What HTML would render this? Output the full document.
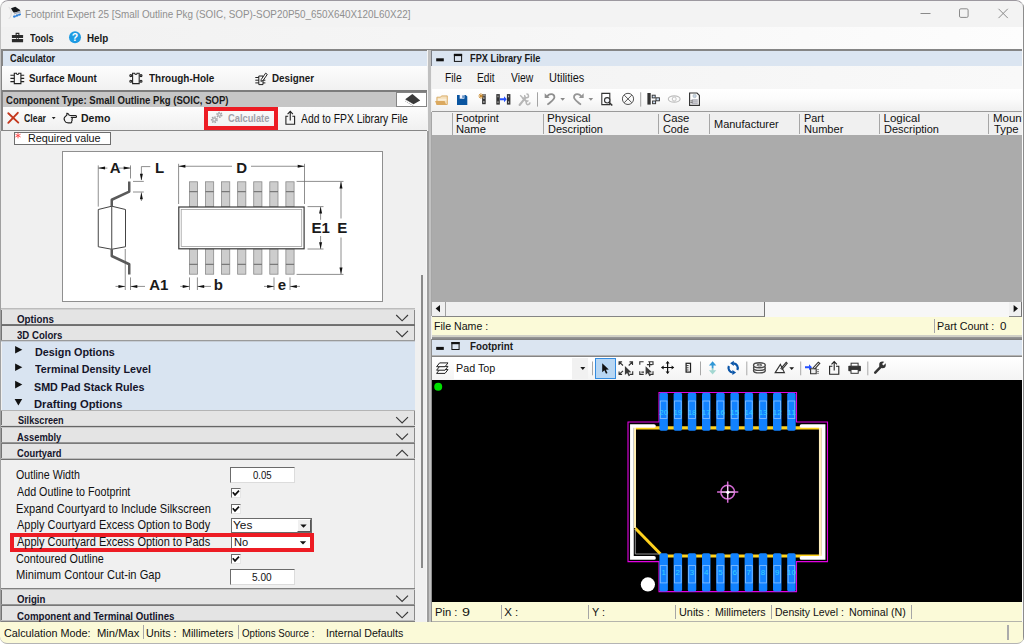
<!DOCTYPE html>
<html><head><meta charset="utf-8">
<style>
*{box-sizing:border-box;margin:0;padding:0}
html,body{width:1024px;height:644px;overflow:hidden;background:#fff;font-family:"Liberation Sans",sans-serif;font-size:11px;color:#000}
.a{position:absolute}
.t{position:absolute;white-space:nowrap;line-height:1;transform-origin:0 0}
#win{position:absolute;left:0;top:0;width:1024px;height:644px;background:#f0f0f0;overflow:hidden;border-radius:8px 8px 7px 7px}
.hdr{position:absolute;left:1px;width:414px;background:#e4e4e4;border-right:1px solid #8a8a8a;border-left:1px solid #747474}
.inp{position:absolute;background:#fff;border:1px solid #6b6b6b;border-right-color:#dcdcdc;border-bottom-color:#dcdcdc}
.cb{position:absolute;left:230.5px;width:10px;height:10px;background:#fff;border-top:1px solid #6b6b6b;border-left:1px solid #6b6b6b;border-right:1px solid #e6e6e6;border-bottom:1px solid #e6e6e6}
.sep{position:absolute;width:1px;background:#a6a6a6}
svg{position:absolute;overflow:visible}
</style></head><body>
<div id="win">
<!-- title bar -->
<div class="a" style="left:0;top:0;width:1024px;height:27px;background:#f3f3f3"></div>
<div class="a" style="left:0;top:27px;width:1024px;height:23px;background:linear-gradient(90deg,#f1f1f1,#f6f6f6 50%,#fdfdfd)"></div>
<div class="a" style="left:0;top:0;width:1024px;height:644px;border:1px solid #c2c2c2;border-top-color:#9c989f;border-radius:8px 8px 7px 7px"></div>
<!-- main frame line -->
<div class="a" style="left:1px;top:49.3px;width:1021px;height:1.6px;background:#858585"></div>

<!-- LEFT PANEL -->
<div class="a" style="left:1px;top:50px;width:1.7px;height:81.2px;background:#858585"></div>
<div class="a" style="left:0px;top:131.2px;width:1.3px;height:490.6px;background:#a0a0a0"></div>
<div class="a" style="left:426px;top:131px;width:1px;height:490.6px;background:#f6f6f6"></div>
<div class="a" style="left:427px;top:50px;width:1px;height:81px;background:#f4f4f4"></div>
<div class="a" style="left:428px;top:50px;width:3px;height:81px;background:#c0c0c0"></div>
<div class="a" style="left:427px;top:131px;width:2px;height:490.6px;background:#9e9e9e"></div>
<div class="a" style="left:429px;top:131px;width:2px;height:490.6px;background:#c2c2c2"></div>
<div class="a" style="left:430.6px;top:50.5px;width:1.4px;height:15.5px;background:#7c8088"></div>
<div class="a" style="left:430.6px;top:112px;width:1.2px;height:204px;background:#a6a6a6"></div>
<div class="a" style="left:430.5px;top:338.5px;width:1.3px;height:283px;background:#8e8e8e"></div>
<div class="a" style="left:2.7px;top:50.9px;width:424.3px;height:15.1px;background:#dbe5f1"></div>
<div class="a" style="left:1.5px;top:66px;width:425.5px;height:23.6px;background:linear-gradient(#fdfdfd,#f1f1f1)"></div>
<div class="a" style="left:1.5px;top:89.6px;width:425.5px;height:2px;background:#7c7c7c"></div>
<div class="a" style="left:2.7px;top:91.5px;width:424.3px;height:15px;background:#c6c6c6"></div>
<div class="a" style="left:396.2px;top:91.5px;width:30.8px;height:15px;background:#fff;border:1px solid #858585"></div>
<div class="a" style="left:2.7px;top:106.5px;width:424.3px;height:23.7px;background:linear-gradient(#fcfcfc,#f0f0f0)"></div>
<div class="a" style="left:204px;top:107px;width:74px;height:23px;border:4px solid #ed1c24"></div>
<div class="a" style="left:2.7px;top:130.1px;width:424.3px;height:1.1px;background:#868686"></div>
<!-- required value -->
<div class="a" style="left:14px;top:132px;width:97px;height:13px;background:#fff;border:1px solid #6e6e6e"></div>
<!-- diagram box -->
<div class="a" style="left:61.8px;top:151px;width:321.2px;height:151px;background:#fff;border:1px solid #8f8f8f"></div>
<svg class="a" style="left:0;top:0" width="430" height="310" viewBox="0 0 430 310">
<g stroke="#6a6a6a" stroke-width="0.75" fill="none">
<path d="M98.25,165.4V206.6 M130.5,165.4V178.5 M98.25,168.1H107.4 M119,168.1H130.5"/>
<path d="M141.4,166.6H150.3 M141.4,166.6V180 M133,181.4H143.8 M133,192H143.8 M141.4,192.5V201"/>
<path d="M178.6,163.8V204 M304.5,163.8V204 M178.6,166.25H232 M251,166.25H304.5"/>
<path d="M307.5,206.6H323.5 M307.5,249H323.5 M320.6,207V219.8 M320.6,236V249"/>
<path d="M296.6,181.4H343.5 M296.6,274.4H343.5 M341,182V218.5 M341,237.5V274"/>
<path d="M125.25,249V290 M130.5,277.4V290 M115.5,286.4H125 M130.5,286.4H145"/>
<path d="M189.5,277.4V290 M197.4,277.4V290 M180.2,286.4H189.5 M197.4,286.4H211"/>
<path d="M274,277.4V290 M290,277.4V290 M264,286.4H274 M290,286.4H300"/>
</g>
<g fill="#111" stroke="none">
<polygon points="98.25,168.1 105.05,166.6 105.05,169.6"/>
<polygon points="130.5,168.1 123.7,166.6 123.7,169.6"/>
<polygon points="141.4,180.6 139.9,173.79999999999998 142.9,173.79999999999998"/>
<polygon points="141.4,192.4 139.9,199.20000000000002 142.9,199.20000000000002"/>
<polygon points="178.6,166.25 185.4,164.75 185.4,167.75"/>
<polygon points="304.5,166.25 297.7,164.75 297.7,167.75"/>
<polygon points="320.6,206.8 319.1,213.60000000000002 322.1,213.60000000000002"/>
<polygon points="320.6,249 319.1,242.2 322.1,242.2"/>
<polygon points="341,181.6 339.5,188.4 342.5,188.4"/>
<polygon points="341,274.2 339.5,267.4 342.5,267.4"/>
<polygon points="125.25,286.4 118.45,284.9 118.45,287.9"/>
<polygon points="130.5,286.4 137.3,284.9 137.3,287.9"/>
<polygon points="189.5,286.4 182.7,284.9 182.7,287.9"/>
<polygon points="197.4,286.4 204.20000000000002,284.9 204.20000000000002,287.9"/>
<polygon points="274,286.4 267.2,284.9 267.2,287.9"/>
<polygon points="290,286.4 296.8,284.9 296.8,287.9"/>
</g>
<polygon points="98.25,209.5 111.75,206.2 125.5,209.5 125.5,246.75 111.75,249.25 98.25,246.75" fill="#fff" stroke="#444" stroke-width="1"/>
<path d="M111.75,206V249.3" stroke="#444" stroke-width="1" fill="none"/>
<path d="M129.25,181.6V191.6L111.75,199.75V206.2 M111.75,249.25V256L129.25,264.25V274.5" stroke="#5a5a5a" stroke-width="2.5" fill="none" stroke-linejoin="round"/>
<rect x="189.40" y="181.8" width="8.2" height="25" fill="#cdcdcd" stroke="#8a8a8a" stroke-width="0.8"/>
<path d="M189.40,191.7h8.2" stroke="#666" stroke-width="1"/>
<rect x="189.40" y="249" width="8.2" height="25.2" fill="#cdcdcd" stroke="#8a8a8a" stroke-width="0.8"/>
<path d="M189.40,264.3h8.2" stroke="#666" stroke-width="1"/>
<rect x="205.48" y="181.8" width="8.2" height="25" fill="#cdcdcd" stroke="#8a8a8a" stroke-width="0.8"/>
<path d="M205.48,191.7h8.2" stroke="#666" stroke-width="1"/>
<rect x="205.48" y="249" width="8.2" height="25.2" fill="#cdcdcd" stroke="#8a8a8a" stroke-width="0.8"/>
<path d="M205.48,264.3h8.2" stroke="#666" stroke-width="1"/>
<rect x="221.56" y="181.8" width="8.2" height="25" fill="#cdcdcd" stroke="#8a8a8a" stroke-width="0.8"/>
<path d="M221.56,191.7h8.2" stroke="#666" stroke-width="1"/>
<rect x="221.56" y="249" width="8.2" height="25.2" fill="#cdcdcd" stroke="#8a8a8a" stroke-width="0.8"/>
<path d="M221.56,264.3h8.2" stroke="#666" stroke-width="1"/>
<rect x="237.64" y="181.8" width="8.2" height="25" fill="#cdcdcd" stroke="#8a8a8a" stroke-width="0.8"/>
<path d="M237.64,191.7h8.2" stroke="#666" stroke-width="1"/>
<rect x="237.64" y="249" width="8.2" height="25.2" fill="#cdcdcd" stroke="#8a8a8a" stroke-width="0.8"/>
<path d="M237.64,264.3h8.2" stroke="#666" stroke-width="1"/>
<rect x="253.72" y="181.8" width="8.2" height="25" fill="#cdcdcd" stroke="#8a8a8a" stroke-width="0.8"/>
<path d="M253.72,191.7h8.2" stroke="#666" stroke-width="1"/>
<rect x="253.72" y="249" width="8.2" height="25.2" fill="#cdcdcd" stroke="#8a8a8a" stroke-width="0.8"/>
<path d="M253.72,264.3h8.2" stroke="#666" stroke-width="1"/>
<rect x="269.80" y="181.8" width="8.2" height="25" fill="#cdcdcd" stroke="#8a8a8a" stroke-width="0.8"/>
<path d="M269.80,191.7h8.2" stroke="#666" stroke-width="1"/>
<rect x="269.80" y="249" width="8.2" height="25.2" fill="#cdcdcd" stroke="#8a8a8a" stroke-width="0.8"/>
<path d="M269.80,264.3h8.2" stroke="#666" stroke-width="1"/>
<rect x="285.88" y="181.8" width="8.2" height="25" fill="#cdcdcd" stroke="#8a8a8a" stroke-width="0.8"/>
<path d="M285.88,191.7h8.2" stroke="#666" stroke-width="1"/>
<rect x="285.88" y="249" width="8.2" height="25.2" fill="#cdcdcd" stroke="#8a8a8a" stroke-width="0.8"/>
<path d="M285.88,264.3h8.2" stroke="#666" stroke-width="1"/>
<rect x="178.8" y="207" width="125.3" height="41.8" fill="#fff" stroke="#3a3a3a" stroke-width="1.2"/>
<rect x="181.2" y="209.4" width="120.5" height="37" fill="none" stroke="#a0a0a0" stroke-width="0.8"/>
<text x="115.2" y="172.9" text-anchor="middle" font-family="Liberation Sans,sans-serif" font-weight="bold" font-size="15" fill="#1a1a1a">A</text>
<text x="159.6" y="172.9" text-anchor="middle" font-family="Liberation Sans,sans-serif" font-weight="bold" font-size="15" fill="#1a1a1a">L</text>
<text x="241.7" y="172.9" text-anchor="middle" font-family="Liberation Sans,sans-serif" font-weight="bold" font-size="15" fill="#1a1a1a">D</text>
<text x="320.7" y="232.6" text-anchor="middle" font-family="Liberation Sans,sans-serif" font-weight="bold" font-size="15" fill="#1a1a1a">E1</text>
<text x="342.2" y="232.6" text-anchor="middle" font-family="Liberation Sans,sans-serif" font-weight="bold" font-size="15" fill="#1a1a1a">E</text>
<text x="158.8" y="289.9" text-anchor="middle" font-family="Liberation Sans,sans-serif" font-weight="bold" font-size="15" fill="#1a1a1a">A1</text>
<text x="218.3" y="289.9" text-anchor="middle" font-family="Liberation Sans,sans-serif" font-weight="bold" font-size="15" fill="#1a1a1a">b</text>
<text x="282" y="289.9" text-anchor="middle" font-family="Liberation Sans,sans-serif" font-weight="bold" font-size="15" fill="#1a1a1a">e</text>
</svg>
<!-- scrollbar thumb -->
<div class="a" style="left:421px;top:275px;width:2px;height:292.5px;background:#8a8a8a"></div>

<!-- accordions -->
<div class="hdr" style="top:308px;height:18px"></div>
<div class="hdr" style="top:326px;height:15px"></div>
<div class="a" style="left:2px;top:341px;width:412.5px;height:69px;background:#d9e4f1"></div>
<div class="hdr" style="top:410px;height:17px"></div>
<div class="hdr" style="top:427px;height:16px"></div>
<div class="hdr" style="top:443px;height:17px"></div>
<div class="a" style="left:414px;top:460px;width:1px;height:128px;background:#b9b9b9"></div>
<div class="hdr" style="top:588px;height:17px"></div>
<div class="hdr" style="top:605px;height:17px"></div>
<div class="a" style="left:1px;top:308px;width:414px;height:1px;background:#bcbcbc"></div>
<div class="a" style="left:1px;top:309px;width:414px;height:1px;background:#d2d2d2"></div>
<div class="a" style="left:1px;top:324px;width:414px;height:1px;background:#747474"></div>
<div class="a" style="left:1px;top:325px;width:414px;height:1px;background:#6e6e6e"></div>
<div class="a" style="left:1px;top:340px;width:414px;height:1px;background:#9a9a9a"></div>
<div class="a" style="left:1px;top:341px;width:414px;height:1px;background:#c6cdd6"></div>
<div class="a" style="left:1px;top:410px;width:414px;height:1px;background:#b4b4b4"></div>
<div class="a" style="left:1px;top:425px;width:414px;height:1px;background:#d6d6d6"></div>
<div class="a" style="left:1px;top:426px;width:414px;height:1px;background:#666"></div>
<div class="a" style="left:1px;top:427px;width:414px;height:1px;background:#c4c4c4"></div>
<div class="a" style="left:1px;top:442px;width:414px;height:1px;background:#959595"></div>
<div class="a" style="left:1px;top:443px;width:414px;height:1px;background:#7a7a7a"></div>
<div class="a" style="left:1px;top:458px;width:414px;height:1px;background:#bcbcbc"></div>
<div class="a" style="left:1px;top:459px;width:414px;height:1px;background:#707070"></div>
<div class="a" style="left:1px;top:588px;width:414px;height:1px;background:#808080"></div>
<div class="a" style="left:1px;top:589px;width:414px;height:1px;background:#c4c4c4"></div>
<div class="a" style="left:1px;top:604px;width:414px;height:1px;background:#959595"></div>
<div class="a" style="left:1px;top:605px;width:414px;height:1px;background:#787878"></div>
<div class="a" style="left:1px;top:620px;width:414px;height:1px;background:#bcbcbc"></div>
<div class="a" style="left:1px;top:621px;width:414px;height:1px;background:#808080"></div>
<!--CHEVRONS-->
<!-- form -->
<div class="inp" style="left:230px;top:466.5px;width:64.5px;height:16px"></div>
<div class="cb" style="top:488px"></div>
<div class="cb" style="top:504px"></div>
<div class="inp" style="left:230.5px;top:517.5px;width:81px;height:15.5px;border-right-color:#6b6b6b;border-bottom-color:#6b6b6b"></div>
<div class="a" style="left:296.5px;top:519px;width:14px;height:13px;background:#f0f0f0;border:1px solid #fff;border-right-color:#555;border-bottom-color:#555"></div>
<div class="a" style="left:230.5px;top:535.5px;width:80.5px;height:14.5px;background:#fff;border-left:1px solid #6b6b6b;border-top:1px solid #8a8a8a"></div>
<div class="a" style="left:10px;top:533px;width:304px;height:19px;border:4px solid #ed1c24"></div>
<div class="cb" style="top:554px"></div>
<div class="inp" style="left:230px;top:568.5px;width:64.5px;height:16px"></div>
<!--FORMICONS-->

<!-- RIGHT -->
<div class="a" style="left:432px;top:51px;width:590px;height:15px;background:#dbe5f1"></div>
<div class="a" style="left:431.5px;top:66px;width:590.8px;height:22.5px;background:linear-gradient(90deg,#f3f3f3,#f9f9f9)"></div>
<div class="a" style="left:431.5px;top:88.5px;width:590.8px;height:23px;background:linear-gradient(#ffffff,#fbfbfb 45%,#efefef)"></div>
<div class="a" style="left:432px;top:111px;width:590px;height:1px;background:#9a9a9a"></div>
<div class="a" style="left:432px;top:112px;width:590px;height:23px;background:#f0f0f0"></div>
<div class="a" style="left:431.5px;top:135px;width:590.8px;height:166.5px;background:#ababab"></div>
<div class="sep" style="left:452px;top:113px;height:22px"></div>
<div class="sep" style="left:543px;top:113.5px;height:20.5px"></div>
<div class="sep" style="left:658px;top:113.5px;height:20.5px"></div>
<div class="sep" style="left:709px;top:113.5px;height:20.5px"></div>
<div class="sep" style="left:799px;top:113.5px;height:20.5px"></div>
<div class="sep" style="left:879px;top:113.5px;height:20.5px"></div>
<div class="sep" style="left:987.5px;top:113.5px;height:20.5px"></div>
<!-- h scrollbar -->
<div class="a" style="left:432px;top:301.5px;width:590px;height:15px;background:#f7f7f7"></div>
<div class="a" style="left:432px;top:301.5px;width:332.6px;height:15px;background:#f0f0f0;border-right:1.3px solid #747474;border-bottom:1.4px solid #858585"></div>
<div class="a" style="left:432px;top:301.5px;width:13.5px;height:14px;background:#f0f0f0;border-right:1px solid #a0a0a0"></div>
<div class="a" style="left:1008.5px;top:301.5px;width:13.5px;height:15px;background:#f0f0f0;border-right:1.2px solid #747474;border-bottom:1.4px solid #858585"></div>
<div class="a" style="left:432px;top:316.5px;width:590px;height:18.5px;background:#fbfad8"></div>
<div class="sep" style="left:933.5px;top:319px;height:14px"></div>
<div class="a" style="left:432px;top:335px;width:590px;height:1.5px;background:#d0d0c6"></div>
<div class="a" style="left:432px;top:336.5px;width:590px;height:3px;background:linear-gradient(#9a9a9a,#7c7c7c)"></div>
<div class="a" style="left:432px;top:339.5px;width:590px;height:15.5px;background:#dbe5f1"></div>
<div class="a" style="left:432px;top:354.5px;width:590px;height:1px;background:#b4b4b4"></div><div class="a" style="left:432px;top:355.5px;width:590px;height:1px;background:#858585"></div>
<div class="a" style="left:432px;top:356.5px;width:590px;height:23.5px;background:linear-gradient(#ffffff,#f4f4f4)"></div>
<div class="a" style="left:453.5px;top:358px;width:134.5px;height:21px;background:#fff"></div>
<div class="a" style="left:572px;top:358px;width:16px;height:21px;background:#f1f1f1"></div>
<div class="a" style="left:594.5px;top:358px;width:21.5px;height:20.5px;background:#b9d7f3;border:1px solid #348ce0"></div>
<div class="a" style="left:431.7px;top:379.6px;width:590.6px;height:222.7px;background:#000"></div>
<svg class="a" style="left:0;top:0" width="1024" height="644" viewBox="0 0 1024 644">
<circle cx="438.2" cy="386.8" r="4" fill="#00e000"/>
<path d="M633.8,427.9H821.8 M821.8,556H660.5" fill="none" stroke="#ffd21e" stroke-width="3.2"/>
<path d="M634.9,426.4V528" stroke="#ffedb4" stroke-width="2.2" fill="none"/>
<path d="M820.4,426.4V557.6" stroke="#ffefbc" stroke-width="2.9" fill="none"/>
<path d="M635.3,528.3L660.5,554" stroke="#ffd21e" stroke-width="3" fill="none"/>
<path d="M635.3,529V554H659" stroke="#b4b4b4" stroke-width="0.8" fill="none"/>
<path d="M654,426H631.9V557.9H654" stroke="#fff" stroke-width="3.7" fill="none" stroke-linecap="round" stroke-linejoin="miter"/>
<path d="M801.5,426H823.6V557.9H801.5" stroke="#fff" stroke-width="3.7" fill="none" stroke-linecap="round" stroke-linejoin="miter"/>
<path d="M628,422H659V392.5H796.5V422H827.5V561.6H796.5V591.6H659V561.6H628Z" fill="none" stroke="#e200e2" stroke-width="1.1"/>
<rect x="659.40" y="392.7" width="8.5" height="38" rx="1.7" fill="#1282ff"/>
<rect x="660.30" y="401" width="6.7" height="17.5" fill="none" stroke="#86bfff" stroke-width="0.85"/>
<text x="663.65" y="415" text-anchor="middle" font-family="Liberation Sans,sans-serif" font-size="8" fill="#36d0ff" textLength="8.8" lengthAdjust="spacingAndGlyphs">20</text>
<rect x="659.40" y="553.2" width="8.5" height="38.3" rx="1.7" fill="#1282ff"/>
<rect x="660.30" y="565.6" width="6.7" height="17.3" fill="none" stroke="#86bfff" stroke-width="0.85"/>
<text x="663.65" y="575.3" text-anchor="middle" font-family="Liberation Sans,sans-serif" font-size="8" fill="#36d0ff">1</text>
<rect x="673.60" y="392.7" width="8.5" height="38" rx="1.7" fill="#1282ff"/>
<rect x="674.50" y="401" width="6.7" height="17.5" fill="none" stroke="#86bfff" stroke-width="0.85"/>
<text x="677.85" y="415" text-anchor="middle" font-family="Liberation Sans,sans-serif" font-size="8" fill="#36d0ff" textLength="8.8" lengthAdjust="spacingAndGlyphs">19</text>
<rect x="673.60" y="553.2" width="8.5" height="38.3" rx="1.7" fill="#1282ff"/>
<rect x="674.50" y="565.6" width="6.7" height="17.3" fill="none" stroke="#86bfff" stroke-width="0.85"/>
<text x="677.85" y="575.3" text-anchor="middle" font-family="Liberation Sans,sans-serif" font-size="8" fill="#36d0ff">2</text>
<rect x="687.80" y="392.7" width="8.5" height="38" rx="1.7" fill="#1282ff"/>
<rect x="688.70" y="401" width="6.7" height="17.5" fill="none" stroke="#86bfff" stroke-width="0.85"/>
<text x="692.05" y="415" text-anchor="middle" font-family="Liberation Sans,sans-serif" font-size="8" fill="#36d0ff" textLength="8.8" lengthAdjust="spacingAndGlyphs">18</text>
<rect x="687.80" y="553.2" width="8.5" height="38.3" rx="1.7" fill="#1282ff"/>
<rect x="688.70" y="565.6" width="6.7" height="17.3" fill="none" stroke="#86bfff" stroke-width="0.85"/>
<text x="692.05" y="575.3" text-anchor="middle" font-family="Liberation Sans,sans-serif" font-size="8" fill="#36d0ff">3</text>
<rect x="702.00" y="392.7" width="8.5" height="38" rx="1.7" fill="#1282ff"/>
<rect x="702.90" y="401" width="6.7" height="17.5" fill="none" stroke="#86bfff" stroke-width="0.85"/>
<text x="706.25" y="415" text-anchor="middle" font-family="Liberation Sans,sans-serif" font-size="8" fill="#36d0ff" textLength="8.8" lengthAdjust="spacingAndGlyphs">17</text>
<rect x="702.00" y="553.2" width="8.5" height="38.3" rx="1.7" fill="#1282ff"/>
<rect x="702.90" y="565.6" width="6.7" height="17.3" fill="none" stroke="#86bfff" stroke-width="0.85"/>
<text x="706.25" y="575.3" text-anchor="middle" font-family="Liberation Sans,sans-serif" font-size="8" fill="#36d0ff">4</text>
<rect x="716.20" y="392.7" width="8.5" height="38" rx="1.7" fill="#1282ff"/>
<rect x="717.10" y="401" width="6.7" height="17.5" fill="none" stroke="#86bfff" stroke-width="0.85"/>
<text x="720.45" y="415" text-anchor="middle" font-family="Liberation Sans,sans-serif" font-size="8" fill="#36d0ff" textLength="8.8" lengthAdjust="spacingAndGlyphs">16</text>
<rect x="716.20" y="553.2" width="8.5" height="38.3" rx="1.7" fill="#1282ff"/>
<rect x="717.10" y="565.6" width="6.7" height="17.3" fill="none" stroke="#86bfff" stroke-width="0.85"/>
<text x="720.45" y="575.3" text-anchor="middle" font-family="Liberation Sans,sans-serif" font-size="8" fill="#36d0ff">5</text>
<rect x="730.40" y="392.7" width="8.5" height="38" rx="1.7" fill="#1282ff"/>
<rect x="731.30" y="401" width="6.7" height="17.5" fill="none" stroke="#86bfff" stroke-width="0.85"/>
<text x="734.65" y="415" text-anchor="middle" font-family="Liberation Sans,sans-serif" font-size="8" fill="#36d0ff" textLength="8.8" lengthAdjust="spacingAndGlyphs">15</text>
<rect x="730.40" y="553.2" width="8.5" height="38.3" rx="1.7" fill="#1282ff"/>
<rect x="731.30" y="565.6" width="6.7" height="17.3" fill="none" stroke="#86bfff" stroke-width="0.85"/>
<text x="734.65" y="575.3" text-anchor="middle" font-family="Liberation Sans,sans-serif" font-size="8" fill="#36d0ff">6</text>
<rect x="744.60" y="392.7" width="8.5" height="38" rx="1.7" fill="#1282ff"/>
<rect x="745.50" y="401" width="6.7" height="17.5" fill="none" stroke="#86bfff" stroke-width="0.85"/>
<text x="748.85" y="415" text-anchor="middle" font-family="Liberation Sans,sans-serif" font-size="8" fill="#36d0ff" textLength="8.8" lengthAdjust="spacingAndGlyphs">14</text>
<rect x="744.60" y="553.2" width="8.5" height="38.3" rx="1.7" fill="#1282ff"/>
<rect x="745.50" y="565.6" width="6.7" height="17.3" fill="none" stroke="#86bfff" stroke-width="0.85"/>
<text x="748.85" y="575.3" text-anchor="middle" font-family="Liberation Sans,sans-serif" font-size="8" fill="#36d0ff">7</text>
<rect x="758.80" y="392.7" width="8.5" height="38" rx="1.7" fill="#1282ff"/>
<rect x="759.70" y="401" width="6.7" height="17.5" fill="none" stroke="#86bfff" stroke-width="0.85"/>
<text x="763.05" y="415" text-anchor="middle" font-family="Liberation Sans,sans-serif" font-size="8" fill="#36d0ff" textLength="8.8" lengthAdjust="spacingAndGlyphs">13</text>
<rect x="758.80" y="553.2" width="8.5" height="38.3" rx="1.7" fill="#1282ff"/>
<rect x="759.70" y="565.6" width="6.7" height="17.3" fill="none" stroke="#86bfff" stroke-width="0.85"/>
<text x="763.05" y="575.3" text-anchor="middle" font-family="Liberation Sans,sans-serif" font-size="8" fill="#36d0ff">8</text>
<rect x="773.00" y="392.7" width="8.5" height="38" rx="1.7" fill="#1282ff"/>
<rect x="773.90" y="401" width="6.7" height="17.5" fill="none" stroke="#86bfff" stroke-width="0.85"/>
<text x="777.25" y="415" text-anchor="middle" font-family="Liberation Sans,sans-serif" font-size="8" fill="#36d0ff" textLength="8.8" lengthAdjust="spacingAndGlyphs">12</text>
<rect x="773.00" y="553.2" width="8.5" height="38.3" rx="1.7" fill="#1282ff"/>
<rect x="773.90" y="565.6" width="6.7" height="17.3" fill="none" stroke="#86bfff" stroke-width="0.85"/>
<text x="777.25" y="575.3" text-anchor="middle" font-family="Liberation Sans,sans-serif" font-size="8" fill="#36d0ff">9</text>
<rect x="787.20" y="392.7" width="8.5" height="38" rx="1.7" fill="#1282ff"/>
<rect x="788.10" y="401" width="6.7" height="17.5" fill="none" stroke="#86bfff" stroke-width="0.85"/>
<text x="791.45" y="415" text-anchor="middle" font-family="Liberation Sans,sans-serif" font-size="8" fill="#36d0ff" textLength="8.8" lengthAdjust="spacingAndGlyphs">11</text>
<rect x="787.20" y="553.2" width="8.5" height="38.3" rx="1.7" fill="#1282ff"/>
<rect x="788.10" y="565.6" width="6.7" height="17.3" fill="none" stroke="#86bfff" stroke-width="0.85"/>
<text x="791.45" y="575.3" text-anchor="middle" font-family="Liberation Sans,sans-serif" font-size="8" fill="#36d0ff" textLength="8.8" lengthAdjust="spacingAndGlyphs">10</text>
<circle cx="647.9" cy="584.4" r="7.1" fill="#fff"/>
<g fill="none" stroke="#d66bd6" stroke-width="1.5"><circle cx="727.7" cy="492.1" r="6.9"/><path d="M717.1,492.1H738.3 M727.7,481.5V502.7"/></g>
<path d="M721,492.1H734.4 M727.7,485.4V498.8" stroke="#fff" stroke-width="0.9" fill="none" opacity="0.85"/>
<circle cx="727.9" cy="492.3" r="1.6" fill="#fff"/>
</svg>
<div class="a" style="left:431.7px;top:602.3px;width:590.6px;height:19px;background:#fbfad8"></div>
<div class="a" style="left:431.7px;top:620.9px;width:590.6px;height:1.9px;background:#b4b4ac"></div>
<div class="sep" style="left:501px;top:605px;height:14px"></div>
<div class="sep" style="left:588px;top:605px;height:14px"></div>
<div class="sep" style="left:675px;top:605px;height:14px"></div>
<div class="sep" style="left:770.5px;top:605px;height:14px"></div>
<div class="sep" style="left:911px;top:605px;height:14px"></div>

<!-- bottom status -->
<div class="a" style="left:0;top:621.8px;width:1024px;height:22.2px;background:#fbfad8;border-radius:0 0 7px 7px;border-bottom:1.5px solid #b4b4b4"></div>
<div class="sep" style="left:142.5px;top:625px;height:14px"></div>
<div class="sep" style="left:238px;top:625px;height:14px"></div>
<div class="sep" style="left:1007.1px;top:625px;height:15.4px;width:1.7px;background:#ababab"></div>
<svg class="a" style="left:0;top:0" width="1024" height="644" viewBox="0 0 1024 644">
<g><path d="M8.8,7.2C12.4,9.6 12.8,14.6 9,18.7C11.6,16.2 12,10.8 8.8,7.2Z" fill="#fff" stroke="#d4d4d4" stroke-width=".5"/><polygon points="11,8.3 15.3,6.8 19,9.3 20.4,11 13.9,12.7 12.5,10.9" fill="#15191c"/><polygon points="13.9,12.7 20.4,11 21,12.6 14.5,14.2" fill="#a4acba"/><g fill="#2b80dd"><ellipse cx="14.5" cy="16.4" rx="1.5" ry="1.15" transform="rotate(-20 14.5 16.4)"/><ellipse cx="17.1" cy="15.4" rx="1.5" ry="1.15" transform="rotate(-20 17.1 15.4)"/><ellipse cx="19.5" cy="14.5" rx="1.5" ry="1.15" transform="rotate(-20 19.5 14.5)"/></g><path d="M14.2,14.3L14.4,15.6M16.8,13.6L17,14.7M19.2,12.9L19.4,13.9" stroke="#c8ccd6" stroke-width=".9"/></g>
<g fill="#2b2b2b"><path d="M15.6,35V32.8h3.8V35h-1.1v-1.1h-1.6V35z"/><rect x="11.9" y="35" width="11.2" height="3.1" rx=".5"/><rect x="11.9" y="39" width="11.2" height="3.2" rx=".5"/><rect x="16.3" y="37.3" width="2.4" height="2.6" fill="#2b2b2b"/></g>
<rect x="16.9" y="38.1" width="1.2" height=".9" fill="#fafafa"/>
<circle cx="75" cy="37.3" r="6" fill="#1e9be3"/>
<text x="75" y="41.2" text-anchor="middle" font-family="Liberation Sans,sans-serif" font-weight="bold" font-size="10.5" fill="#fff">?</text>
<path d="M920.5,13.5H930.5" stroke="#8a8a8a" stroke-width="1"/>
<rect x="959.5" y="8.8" width="8.6" height="8.6" rx="1.3" fill="none" stroke="#8a8a8a" stroke-width="1"/>
<path d="M998.5,8.8L1007.8,18.1M1007.8,8.8L998.5,18.1" stroke="#8a8a8a" stroke-width="1"/>
<g stroke="#222" fill="none" stroke-width="1.1"><path d="M14.3,73.3H16.4a1.2,1.2 0 0 0 2.4,0H20.9V83.6H14.3Z"/><path d="M10.4,75.2H14.3M10.4,78.4H14.3M10.4,81.6H14.3M20.9,75.2H24.2M20.9,78.4H24.2M20.9,81.6H24.2"/></g>
<g stroke="#222" fill="none" stroke-width="1.1"><path d="M132.6,73.3H134.7a1.2,1.2 0 0 0 2.4,0H139.2V83.6H132.6Z"/><circle cx="130.8" cy="75.6" r="1"/><circle cx="130.8" cy="81.2" r="1"/><circle cx="141" cy="75.6" r="1"/><circle cx="141" cy="81.2" r="1"/></g>
<g stroke="#222" fill="none" stroke-width="1"><path d="M258.8,76H263V84.6H258.8Z"/><path d="M255.3,77.5H258.8M255.3,80.2H258.8M255.3,82.9H258.8M263,80.2H265.4M263,82.9H265.4"/><path d="M261.3,79.4L265.6,73.2L267.3,74.4L263,80.6L260.9,81.3Z" fill="#fff"/></g>
<polygon points="405.2,99.3 412.4,93.9 420.2,100.5 413.5,104.3" fill="#3a3a3a"/>
<path d="M406.2,100.6L405.6,101.6M407.9,101.7L407.3,102.7M409.6,102.8L409,103.8M411.3,103.9L410.7,104.9M413,105L412.6,105.6" stroke="#666" stroke-width=".7" fill="none"/>
<path d="M8.3,113.2L18.3,122.6M17.8,112.8L8.3,122.8" stroke="#c4371d" stroke-width="1.9" stroke-linecap="round"/>
<polygon points="51.8,117.1 55.6,117.1 53.7,119.3" fill="#222"/>
<g stroke="#222" fill="none" stroke-width="1.1" stroke-linejoin="round"><path d="M69.3,115.5H75.6a.9,.9 0 0 1 0,1.9H70.8"/><path d="M69.3,115.5C68.6,113.6 67.6,113 66.8,113.3C67.3,114.5 66.6,115.8 65.4,116.4C64.2,117.3 63.9,119.2 64.6,120.6C65.2,122.2 66.6,122.9 68.2,122.9H70.7C71.8,122.9 72.1,121.7 71.5,121.2C72.4,120.9 72.5,119.7 71.8,119.3C72.6,118.9 72.5,117.7 71.6,117.4"/></g>
<g fill="none" stroke="#a4a4a8" stroke-width="1.7"><circle cx="214.3" cy="119.7" r="2.6" stroke-dasharray="1.4 1"/><circle cx="219.4" cy="114.8" r="2.3" stroke-dasharray="1.3 .9"/></g>
<g fill="#b4b4b8"><circle cx="214.3" cy="119.7" r="2.3"/><circle cx="219.4" cy="114.8" r="2"/></g><circle cx="214.3" cy="119.7" r=".9" fill="#f5f5f5"/><circle cx="219.4" cy="114.8" r=".8" fill="#f5f5f5"/>
<g stroke="#222" fill="none" stroke-width="1.1"><path d="M288.2,116.3H285.9V124.3H294.6V116.3H292.3"/><path d="M290.25,120.5V111.6M287.6,114.1L290.25,111.4L292.9,114.1"/></g>
<rect x="436.2" y="58.3" width="7.6" height="3" fill="#111"/>
<rect x="436.2" y="346.9" width="7.6" height="3" fill="#111"/>
<rect x="454.4" y="54.4" width="7.2" height="7" fill="none" stroke="#111" stroke-width="1"/><rect x="453.9" y="53.9" width="8.2" height="2.2" fill="#111"/>
<rect x="451.9" y="342.5" width="7.2" height="7" fill="none" stroke="#111" stroke-width="1"/><rect x="451.4" y="342" width="8.2" height="2.2" fill="#111"/>
<path d="M436.9,104.5V97.2H440.5L441.5,95.9H447.3V104.5Z" fill="#f4dfba" stroke="#d9a960" stroke-width=".9"/><rect x="437.9" y="98.7" width="8.5" height="1.9" fill="#fbefd8"/><polygon points="435.1,101 444.6,101 446.3,104.9 436.7,104.9" fill="#dba95f"/>
<path d="M457,94.9H465.7L467.3,96.5V105H457Z" fill="#0a55a0"/><rect x="459.7" y="94.9" width="4.7" height="3.8" fill="#f2f2fc"/><rect x="462.5" y="95.4" width="1.1" height="2.5" fill="#0a55a0"/>
<rect x="482.1" y="94.1" width="3.6" height="10.1" fill="#333"/><rect x="482.1" y="94.1" width="3.6" height="2.2" fill="#8a8a8a"/><path d="M483.9,97.2V99M483.9,100.9V102.9" stroke="#e4e4e4" stroke-width=".9"/><path d="M478.4,96H483.4M480.9,93.2V98.8M479.1,94.1L482.7,97.9M482.7,94.1L479.1,97.9" stroke="#c8831f" stroke-width=".85"/>
<rect x="496.3" y="94.1" width="3.5" height="10.5" fill="#333"/><rect x="506.9" y="94.1" width="3.5" height="10.5" fill="#333"/><path d="M498,95.5V97.3M498,101.3V103.1M508.6,95.5V97.3M508.6,101.3V103.1" stroke="#ddd" stroke-width=".8"/><path d="M499.9,98.3H504V96.3L506.8,99.3L504,102.3V100.3H499.9Z" fill="#2450ff"/>
<g stroke="#b6b6b6" fill="none"><path d="M519.6,105L525.3,97.8" stroke-width="2.1" stroke-linecap="round"/><circle cx="526.6" cy="95.9" r="1.9" stroke-width="1.5" stroke-dasharray="9 2.94" transform="rotate(-95 526.6 95.9)"/><path d="M522.3,97.6L526.6,101.4" stroke-width="2"/><circle cx="528" cy="102.8" r="1.8" stroke-width="1.5" stroke-dasharray="8.4 2.9" transform="rotate(-10 528 102.8)"/><path d="M520.2,95.2L522.6,97.8" stroke-width="1.3"/></g>
<rect class="sep" x="537" y="92.3" width="1" height="14.3" fill="#a3a3a3"/>
<path d="M547.2,96.6C548.6,93.4 554.6,93.2 554.4,97.2C554.3,99.8 550.8,101.6 548,104.2" fill="none" stroke="#8f8f8f" stroke-width="1.8" stroke-linecap="round"/><polygon points="544.7,93.2 549.6,98 544.7,98" fill="#8f8f8f"/>
<polygon points="560.3,98.1 565,98.1 562.65,100.7" fill="#8a8a8a"/>
<path d="M581.2,96.6C579.8,93.4 573.8,93.2 574,97.2C574.1,99.8 577.6,101.6 580.4,104.2" fill="none" stroke="#969696" stroke-width="1.8" stroke-linecap="round"/><polygon points="583.7,93.2 578.8,98 583.7,98" fill="#969696"/>
<polygon points="588.5,98.1 593.2,98.1 590.85,100.7" fill="#8f8f8f"/>
<path d="M601.8,93.4H609.8V104.6H601.8Z" fill="#fff" stroke="#333" stroke-width="1.1"/><circle cx="607.2" cy="100.3" r="2.7" fill="#f4f6fb" stroke="#333" stroke-width="1.1"/><path d="M609.2,102.4L612.3,105.6" stroke="#333" stroke-width="1.5"/>
<circle cx="628" cy="98.9" r="5.6" fill="none" stroke="#555" stroke-width="1"/><path d="M624.2,95.1L631.8,102.7M631.8,95.1L624.2,102.7" stroke="#555" stroke-width="1"/>
<rect x="640.2" y="92.3" width="1" height="14.3" fill="#a3a3a3"/>
<rect x="647.4" y="93" width="3.3" height="11.6" fill="#333"/><g fill="#cfe0f5" stroke="#333" stroke-width=".95"><rect x="652.2" y="95.2" width="3" height="2.7"/><rect x="652.6" y="101" width="3" height="2.7"/><rect x="656" y="97.8" width="3.4" height="3"/></g>
<ellipse cx="674.2" cy="99" rx="5.9" ry="3.1" fill="none" stroke="#bdbdbd" stroke-width="1.1"/><circle cx="674.2" cy="99" r="2" fill="none" stroke="#c4c4c4" stroke-width="1"/>
<path d="M689.6,93H697L699.4,95.4V105.4H689.6Z" fill="#fff" stroke="#333" stroke-width="1.15"/><circle cx="694.6" cy="96" r="1.7" fill="#c9d3e4" stroke="#9aa" stroke-width=".5"/><rect x="691.6" y="99.2" width="6.2" height="5" fill="#b4b4bc"/><path d="M690.4,100.9H693M690.4,102.6H693" stroke="#444" stroke-width=".8"/><path d="M691.6,100.9H697.8M691.6,102.6H697.8" stroke="#e8e8e8" stroke-width=".4"/>
<polygon points="435.6,308.6 440,305 440,312.2" fill="#111"/><polygon points="1018,308.6 1013.6,305 1013.6,312.2" fill="#111"/>
<g fill="#fff" stroke="#222" stroke-width="1"><path d="M436.6,373.4L439.6,369.6H448L445,373.4Z"/><path d="M436.6,370.2L439.6,366.4H448L445,370.2Z"/><path d="M436.6,366.7L439.6,362.9H448L445,366.7Z"/></g>
<polygon points="580.3,367 585.3,367 582.8,369.9" fill="#1a1a1a"/>
<rect x="592" y="361.5" width="1" height="13.8" fill="#a8a8a8"/>
<path d="M602.2,363.3V372.3L604.4,370.3L606,373.7L607.5,373L605.9,369.7L608.8,369.6Z" fill="#111"/>
<g stroke="#333" stroke-width="1.15" fill="none"><path d="M619.1,361.9L623,365.5M619.1,364.9V361.9H622.1M632.5,361.9L628.7,365.5M629.5,361.9H632.5V364.9M619.1,374.4L623,370.9M619.1,371.4V374.4H622.1M632.7,371.3V374.4H629.6"/></g><path d="M624.9,366V375L627.1,373.1L628.7,376.3L630.1,375.6L628.5,372.5L631.3,372.3Z" fill="#3a3a3a"/>
<g stroke="#333" stroke-width="1.15" fill="none"><path d="M639.8,364.7V361.7H643.6M648.3,361.7H653V365M639.8,371.3V374.4H643.7M641.4,372.1H644M653,371.3V374.4H650M649.6,361.9V367.3M646.9,364.6H652.3"/></g><path d="M645.6,366.3V375L647.8,373.1L649.4,376.3L650.8,375.6L649.2,372.5L652,372.3Z" fill="#3a3a3a"/>
<g stroke="#111" stroke-width="1.2" fill="none"><path d="M661.8,367.5H673.4M667.6,361.7V373.3"/></g><g fill="#111"><polygon points="661,367.5 663.6,365.5 663.6,369.5"/><polygon points="674.2,367.5 671.6,365.5 671.6,369.5"/><polygon points="667.6,360.9 665.6,363.5 669.6,363.5"/><polygon points="667.6,374.1 665.6,371.5 669.6,371.5"/></g>
<rect x="686.1" y="363.3" width="4.4" height="8.8" fill="#fff" stroke="#222" stroke-width="1.25"/><path d="M686.4,365.6H688.6M686.4,367.8H688.6M686.4,370H688.6" stroke="#222" stroke-width=".9"/>
<rect x="700" y="361.5" width="1" height="13.8" fill="#a8a8a8"/>
<defs><linearGradient id="ud" x1="0" y1="0" x2="0" y2="1"><stop offset="0" stop-color="#2a93d6"/><stop offset=".5" stop-color="#3a9cd6"/><stop offset=".56" stop-color="#9fd5d0"/><stop offset="1" stop-color="#a6d9d2"/></linearGradient></defs>
<path d="M712.6,361.2L716.3,365.6H713.5V370.2H716.3L712.6,374.6L708.9,370.2H711.7V365.6H708.9Z" fill="url(#ud)"/>
<g fill="none" stroke="#0a55a8" stroke-width="2.2"><path d="M733.5,363.3A4.6,4.6 0 0 1 737.3,369.9"/><path d="M728.9,366A4.6,4.6 0 0 0 732.7,372.5"/></g><polygon points="730.1,363.3 733.8,360.7 733.8,365.9" fill="#0a55a8"/><polygon points="736.1,372.5 732.4,369.9 732.4,375.1" fill="#0a55a8"/>
<rect x="746.3" y="361.5" width="1" height="13.8" fill="#a8a8a8"/>
<g fill="#fbfbfb" stroke="#4c4c4c" stroke-width="1.35"><ellipse cx="759.4" cy="370.4" rx="5.9" ry="2.5"/><ellipse cx="759.4" cy="367.9" rx="5.9" ry="2.5"/><ellipse cx="759.4" cy="365.2" rx="5.9" ry="2.5"/></g><ellipse cx="759.4" cy="365.1" rx="2.5" ry=".9" fill="none" stroke="#4c4c4c" stroke-width="1"/>
<g fill="none" stroke="#333" stroke-width="1.1"><path d="M775.2,372.6L780.4,364.4L784.4,372.6Z"/><path d="M780.6,368.8L786.2,362.4L787.2,363.3L781.7,369.8"/></g><polygon points="789.3,367.2 794.1,367.2 791.7,370" fill="#1a1a1a"/>
<rect x="800.2" y="361.5" width="1" height="13.8" fill="#a8a8a8"/>
<path d="M805,366.3H809V364.3L812,367.3L809,370.3V368.3H805Z" fill="#2450ff"/><g fill="none" stroke="#333" stroke-width="1.1"><path d="M810.6,368.8H816.2V373.8H810.6Z" fill="#eee"/><path d="M812.9,368.2L818.3,362.2L819.8,363.4L814.6,369.2"/><path d="M816.6,369.6H819M816.6,371.5H819M816.6,373.3H819" stroke="#7a7a7a" stroke-width=".9"/></g>
<g stroke="#222" fill="none" stroke-width="1.1"><path d="M832.4,366.3H829.6V374.2H838.8V366.3H836"/><path d="M834.2,370.5V361.7M831.5,364.3L834.2,361.5L836.9,364.3"/></g>
<rect x="848.3" y="365.8" width="12.6" height="5.4" rx=".8" fill="#333"/><rect x="851.1" y="363.2" width="7" height="3" fill="#fff" stroke="#333" stroke-width="1"/><rect x="851" y="369.4" width="7.2" height="3.9" fill="#fff" stroke="#333" stroke-width="1"/>
<rect x="867.3" y="361.5" width="1" height="13.8" fill="#a8a8a8"/>
<path d="M875.2,372.6L881,366.6" stroke="#333" stroke-width="2.5" stroke-linecap="round"/><circle cx="882.5" cy="364.9" r="3.3" fill="#333"/><rect x="881.5" y="360" width="2.1" height="4.6" fill="#fafafa" transform="rotate(45 882.5 364.9)"/>
<polygon points="15.1,346.0 22.3,349.8 15.1,353.6" fill="#111"/>
<polygon points="15.1,363.5 22.3,367.3 15.1,371.1" fill="#111"/>
<polygon points="15.1,380.8 22.3,384.6 15.1,388.40000000000003" fill="#111"/>
<polygon points="14.6,399 22.2,399 18.4,405.5" fill="#111"/>
<path d="M396.2,315L402.1,320.8L408,315" fill="none" stroke="#383838" stroke-width="1.15"/>
<path d="M396.2,330.8L402.1,336.6L408,330.8" fill="none" stroke="#383838" stroke-width="1.15"/>
<path d="M396.2,417.1L402.1,422.90000000000003L408,417.1" fill="none" stroke="#383838" stroke-width="1.15"/>
<path d="M396.2,433.6L402.1,439.40000000000003L408,433.6" fill="none" stroke="#383838" stroke-width="1.15"/>
<path d="M396.2,456.1L402.1,450.3L408,456.1" fill="none" stroke="#383838" stroke-width="1.15"/>
<path d="M396.2,595.7L402.1,601.5L408,595.7" fill="none" stroke="#383838" stroke-width="1.15"/>
<path d="M396.2,612L402.1,617.8L408,612" fill="none" stroke="#383838" stroke-width="1.15"/>
<path d="M232.8,492.3L235,494.9L239,490.7" fill="none" stroke="#111" stroke-width="1.7"/>
<path d="M232.8,508.3L235,510.9L239,506.7" fill="none" stroke="#111" stroke-width="1.7"/>
<path d="M232.8,558.3L235,560.9L239,556.7" fill="none" stroke="#111" stroke-width="1.7"/>
<polygon points="300.3,524.4 306.7,524.4 303.5,527.8" fill="#111"/>
<polygon points="299.8,541.2 306.2,541.2 303,544.6" fill="#111"/>
<path d="M18,132.8V138.4M15.4,134.2L20.6,137M20.6,134.2L15.4,137" stroke="#f33" stroke-width=".8"/>
</svg>
<div class="t" style="left:25.08px;top:9.00px;font-size:10.75px;font-weight:normal;color:#8f8f8f;transform:scaleX(0.9187)">Footprint Expert 25 [Small Outline Pkg (SOIC, SOP)-SOP20P50_650X640X120L60X22]</div>
<div class="t" style="left:30.00px;top:33.00px;font-size:11.5px;font-weight:bold;color:#1a1a1a;transform:scaleX(0.7931)">Tools</div>
<div class="t" style="left:86.65px;top:33.00px;font-size:11.5px;font-weight:bold;color:#1a1a1a;transform:scaleX(0.8542)">Help</div>
<div class="t" style="left:9.50px;top:53.00px;font-size:10.75px;font-weight:bold;color:#1a1a1a;transform:scaleX(0.8585)">Calculator</div>
<div class="t" style="left:29.15px;top:73.00px;font-size:11.5px;font-weight:bold;color:#1a1a1a;transform:scaleX(0.8481)">Surface Mount</div>
<div class="t" style="left:148.50px;top:73.00px;font-size:11.5px;font-weight:bold;color:#1a1a1a;transform:scaleX(0.8667)">Through-Hole</div>
<div class="t" style="left:272.15px;top:73.00px;font-size:11.5px;font-weight:bold;color:#1a1a1a;transform:scaleX(0.8542)">Designer</div>
<div class="t" style="left:5.50px;top:95.00px;font-size:10.75px;font-weight:bold;color:#1a1a1a;transform:scaleX(0.8900)">Component Type: Small Outline Pkg (SOIC, SOP)</div>
<div class="t" style="left:24.00px;top:113.00px;font-size:10.75px;font-weight:bold;color:#1a1a1a;transform:scaleX(0.8148)">Clear</div>
<div class="t" style="left:80.52px;top:113.00px;font-size:10.75px;font-weight:bold;color:#1a1a1a;transform:scaleX(0.9821)">Demo</div>
<div class="t" style="left:227.50px;top:113.00px;font-size:11.5px;font-weight:bold;color:#a0a0a8;transform:scaleX(0.8088)">Calculate</div>
<div class="t" style="left:300.75px;top:113.00px;font-size:12.25px;font-weight:normal;color:#111;transform:scaleX(0.8433)">Add to FPX Library File</div>
<div class="t" style="left:28.00px;top:133.00px;font-size:10.75px;font-weight:normal;color:#111;transform:scaleX(1.0042)">Required value</div>
<div class="t" style="left:17.25px;top:314.00px;font-size:10.75px;font-weight:bold;color:#15152a;transform:scaleX(0.9062)">Options</div>
<div class="t" style="left:17.31px;top:330.00px;font-size:10.75px;font-weight:bold;color:#15152a;transform:scaleX(0.8939)">3D Colors</div>
<div class="t" style="left:34.74px;top:347.00px;font-size:11.25px;font-weight:bold;color:#15152a;transform:scaleX(0.9598)">Design Options</div>
<div class="t" style="left:34.75px;top:364.00px;font-size:11.25px;font-weight:bold;color:#15152a;transform:scaleX(0.9525)">Terminal Density Level</div>
<div class="t" style="left:33.80px;top:382.00px;font-size:11.25px;font-weight:bold;color:#15152a;transform:scaleX(0.9548)">SMD Pad Stack Rules</div>
<div class="t" style="left:33.75px;top:399.00px;font-size:11.25px;font-weight:bold;color:#15152a;transform:scaleX(0.9960)">Drafting Options</div>
<div class="t" style="left:17.50px;top:415.00px;font-size:10.75px;font-weight:bold;color:#15152a;transform:scaleX(0.8491)">Silkscreen</div>
<div class="t" style="left:17.25px;top:432.00px;font-size:10.75px;font-weight:bold;color:#15152a;transform:scaleX(0.8716)">Assembly</div>
<div class="t" style="left:17.25px;top:448.00px;font-size:10.75px;font-weight:bold;color:#15152a;transform:scaleX(0.8676)">Courtyard</div>
<div class="t" style="left:17.25px;top:594.00px;font-size:11.25px;font-weight:bold;color:#15152a;transform:scaleX(0.8561)">Origin</div>
<div class="t" style="left:17.25px;top:611.00px;font-size:10.75px;font-weight:bold;color:#15152a;transform:scaleX(0.9009)">Component and Terminal Outlines</div>
<div class="t" style="left:15.63px;top:469.00px;font-size:12.25px;font-weight:normal;color:#111;transform:scaleX(0.8681)">Outline Width</div>
<div class="t" style="left:16.50px;top:486.00px;font-size:12.25px;font-weight:normal;color:#111;transform:scaleX(0.8760)">Add Outline to Footprint</div>
<div class="t" style="left:15.59px;top:503.00px;font-size:12.25px;font-weight:normal;color:#111;transform:scaleX(0.9061)">Expand Courtyard to Include Silkscreen</div>
<div class="t" style="left:16.50px;top:519.00px;font-size:12.25px;font-weight:normal;color:#111;transform:scaleX(0.8977)">Apply Courtyard Excess Option to Body</div>
<div class="t" style="left:16.50px;top:536.00px;font-size:12.25px;font-weight:normal;color:#111;transform:scaleX(0.8977)">Apply Courtyard Excess Option to Pads</div>
<div class="t" style="left:15.62px;top:553.00px;font-size:12.25px;font-weight:normal;color:#111;transform:scaleX(0.8827)">Contoured Outline</div>
<div class="t" style="left:15.59px;top:569.00px;font-size:12.25px;font-weight:normal;color:#111;transform:scaleX(0.9082)">Minimum Contour Cut-in Gap</div>
<div class="t" style="left:253.25px;top:470.00px;font-size:10.75px;font-weight:normal;color:#111;transform:scaleX(0.8929)">0.05</div>
<div class="t" style="left:252.31px;top:572.00px;font-size:10.75px;font-weight:normal;color:#111;transform:scaleX(0.9375)">5.00</div>
<div class="t" style="left:233.47px;top:520.00px;font-size:11.5px;font-weight:normal;color:#111;transform:scaleX(1.0294)">Yes</div>
<div class="t" style="left:233.54px;top:537.00px;font-size:11.5px;font-weight:normal;color:#111;transform:scaleX(0.9615)">No</div>
<div class="t" style="left:469.89px;top:53.00px;font-size:10.75px;font-weight:bold;color:#1a1a1a;transform:scaleX(0.8594)">FPX Library File</div>
<div class="t" style="left:445.14px;top:72.00px;font-size:12.0px;font-weight:normal;color:#111;transform:scaleX(0.8611)">File</div>
<div class="t" style="left:476.90px;top:72.00px;font-size:12.0px;font-weight:normal;color:#111;transform:scaleX(0.8500)">Edit</div>
<div class="t" style="left:511.00px;top:72.00px;font-size:12.0px;font-weight:normal;color:#111;transform:scaleX(0.8654)">View</div>
<div class="t" style="left:548.84px;top:72.00px;font-size:12.0px;font-weight:normal;color:#111;transform:scaleX(0.9122)">Utilities</div>
<div class="t" style="left:456.06px;top:113.00px;font-size:11.5px;font-weight:normal;color:#111;transform:scaleX(0.9432)">Footprint</div>
<div class="t" style="left:456.03px;top:124.00px;font-size:11.5px;font-weight:normal;color:#111;transform:scaleX(0.9741)">Name</div>
<div class="t" style="left:547.48px;top:113.00px;font-size:11.5px;font-weight:normal;color:#111;transform:scaleX(1.0183)">Physical</div>
<div class="t" style="left:547.54px;top:124.00px;font-size:11.5px;font-weight:normal;color:#111;transform:scaleX(0.9554)">Description</div>
<div class="t" style="left:662.52px;top:113.00px;font-size:11.5px;font-weight:normal;color:#111;transform:scaleX(0.9800)">Case</div>
<div class="t" style="left:662.56px;top:124.00px;font-size:11.5px;font-weight:normal;color:#111;transform:scaleX(0.9423)">Code</div>
<div class="t" style="left:713.54px;top:119.00px;font-size:11.5px;font-weight:normal;color:#111;transform:scaleX(0.9552)">Manufacturer</div>
<div class="t" style="left:803.55px;top:113.00px;font-size:11.5px;font-weight:normal;color:#111;transform:scaleX(0.9500)">Part</div>
<div class="t" style="left:803.54px;top:124.00px;font-size:11.5px;font-weight:normal;color:#111;transform:scaleX(0.9625)">Number</div>
<div class="t" style="left:883.50px;top:113.00px;font-size:11.5px;font-weight:normal;color:#111;transform:scaleX(1.0000)">Logical</div>
<div class="t" style="left:883.54px;top:124.00px;font-size:11.5px;font-weight:normal;color:#111;transform:scaleX(0.9554)">Description</div>
<div class="t" style="left:992.50px;top:113.00px;font-size:11.5px;font-weight:normal;color:#111;transform:scaleX(0.9968)">Mount</div>
<div class="t" style="left:994.00px;top:124.00px;font-size:11.5px;font-weight:normal;color:#111;transform:scaleX(0.9875)">Type</div>
<div class="t" style="left:433.58px;top:321.00px;font-size:11.5px;font-weight:normal;color:#111;transform:scaleX(0.9211)">File Name :</div>
<div class="t" style="left:937.07px;top:321.00px;font-size:11.5px;font-weight:normal;color:#111;transform:scaleX(0.9333)">Part Count :</div>
<div class="t" style="left:1000.00px;top:321.00px;font-size:11.5px;font-weight:normal;color:#111;transform:scaleX(1.0000)">0</div>
<div class="t" style="left:469.84px;top:341.00px;font-size:10.75px;font-weight:bold;color:#1a1a1a;transform:scaleX(0.9130)">Footprint</div>
<div class="t" style="left:456.31px;top:363.00px;font-size:11.5px;font-weight:normal;color:#111;transform:scaleX(0.9375)">Pad Top</div>
<div class="t" style="left:434.83px;top:607.00px;font-size:11.5px;font-weight:normal;color:#111;transform:scaleX(0.9714)">Pin :</div>
<div class="t" style="left:461.50px;top:607.00px;font-size:11.5px;font-weight:normal;color:#111;transform:scaleX(1.2500)">9</div>
<div class="t" style="left:504.25px;top:607.00px;font-size:11.5px;font-weight:normal;color:#111;transform:scaleX(1.0000)">X :</div>
<div class="t" style="left:591.81px;top:607.00px;font-size:11.5px;font-weight:normal;color:#111;transform:scaleX(0.9375)">Y :</div>
<div class="t" style="left:679.05px;top:607.00px;font-size:11.5px;font-weight:normal;color:#111;transform:scaleX(0.9452)">Units :</div>
<div class="t" style="left:714.78px;top:607.00px;font-size:11.5px;font-weight:normal;color:#111;transform:scaleX(0.9222)">Millimeters</div>
<div class="t" style="left:774.59px;top:607.00px;font-size:11.5px;font-weight:normal;color:#111;transform:scaleX(0.9122)">Density Level :</div>
<div class="t" style="left:849.08px;top:607.00px;font-size:11.5px;font-weight:normal;color:#111;transform:scaleX(0.9250)">Nominal (N)</div>
<div class="t" style="left:3.56px;top:628.00px;font-size:11.5px;font-weight:normal;color:#111;transform:scaleX(0.9389)">Calculation Mode:</div>
<div class="t" style="left:97.02px;top:628.00px;font-size:11.5px;font-weight:normal;color:#111;transform:scaleX(0.9762)">Min/Max</div>
<div class="t" style="left:146.06px;top:628.00px;font-size:11.5px;font-weight:normal;color:#111;transform:scaleX(0.9355)">Units :</div>
<div class="t" style="left:182.06px;top:628.00px;font-size:11.5px;font-weight:normal;color:#111;transform:scaleX(0.9352)">Millimeters</div>
<div class="t" style="left:242.15px;top:628.00px;font-size:11.5px;font-weight:normal;color:#111;transform:scaleX(0.8452)">Options Source :</div>
<div class="t" style="left:325.78px;top:628.00px;font-size:11.5px;font-weight:normal;color:#111;transform:scaleX(0.9220)">Internal Defaults</div>
<div class="a" style="left:1022.3px;top:50px;width:0.7px;height:572px;background:#fafafa"></div><div class="a" style="left:1023px;top:0px;width:1px;height:640px;background:#8c8c8c"></div>
</div>
</body></html>
